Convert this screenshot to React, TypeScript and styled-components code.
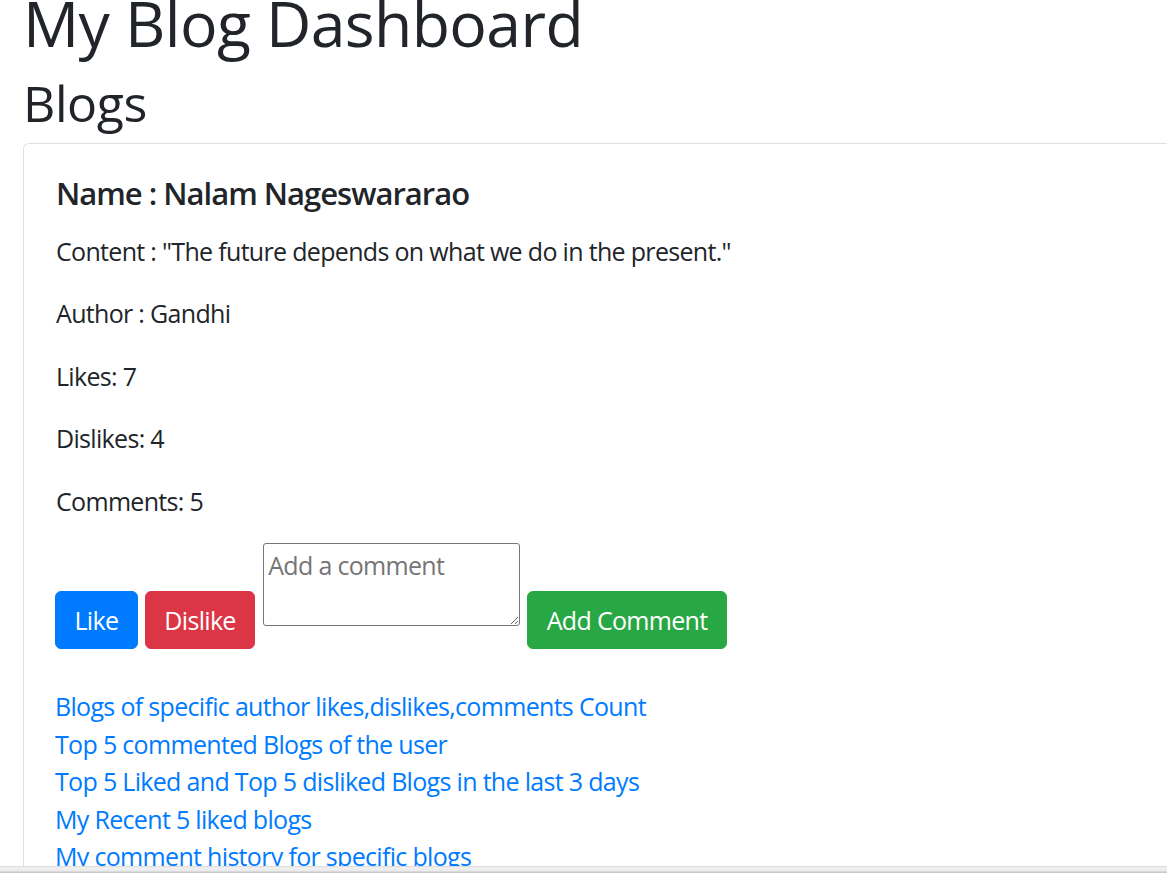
import React from "react";
import styled, { createGlobalStyle } from "styled-components";

const Global = createGlobalStyle`
  html, body {
    margin: 0;
    padding: 0;
    background: #ffffff;
    overflow: hidden;
  }
  body {
    font-family: "Open Sans", "Noto Sans", "Liberation Sans", sans-serif;
    font-size: 25px;
    line-height: 1.5;
    letter-spacing: -0.68px;
    color: #212529;
  }
  * { box-sizing: border-box; }
`;

const Page = styled.div`
  padding: 0 23px;
  margin-top: -15px;
  width: 1400px;
`;

const Title = styled.h1`
  font-size: 62.5px;
  font-weight: 500;
  letter-spacing: -0.6px;
  line-height: 75px;
  margin: 0 0 12.5px;
  color: #212529;
`;

const Subtitle = styled.h2`
  font-size: 50px;
  font-weight: 500;
  letter-spacing: -0.4px;
  line-height: 60px;
  margin: 0 0 10.5px;
  color: #212529;
`;

const Card = styled.div`
  border: 1px solid rgba(0, 0, 0, 0.125);
  border-radius: 6px;
  background: #fff;
  min-height: 900px;
`;

const CardBody = styled.div`
  padding: 31px 32px;
`;

const CardTitle = styled.h5`
  font-size: 31px;
  font-weight: 600;
  letter-spacing: -1px;
  line-height: 37.5px;
  margin: 0 0 20px;
  color: #212529;
`;

const Field = styled.p`
  margin: 0 0 25px;
  line-height: 37.5px;
`;

const ActionRow = styled.div`
  display: flex;
  align-items: flex-end;
  gap: 7px;
  margin: -2px 0 0 -1px;
`;

const Button = styled.button<{ $variant: "primary" | "danger" | "success" }>`
  font-family: inherit;
  font-size: 25px;
  letter-spacing: -0.68px;
  line-height: 1;
  height: 58px;
  padding: 0 18.5px;
  border: 1.5px solid transparent;
  border-radius: 6px;
  color: #fff;
  cursor: pointer;
  display: inline-flex;
  align-items: center;
  justify-content: center;
  background: ${(p) =>
    p.$variant === "primary" ? "#007bff" : p.$variant === "danger" ? "#dc3545" : "#28a745"};
  border-color: ${(p) =>
    p.$variant === "primary" ? "#007bff" : p.$variant === "danger" ? "#dc3545" : "#28a745"};
`;

const CommentBox = styled.textarea`
  width: 257px;
  height: 83px;
  margin: 0 0 23px 1px;
  padding: 3px 4px;
  font-family: inherit;
  font-size: 25px;
  letter-spacing: -0.68px;
  line-height: 37.5px;
  color: #212529;
  border: 1px solid #767676;
  border-radius: 3px;
  resize: vertical;
  overflow: auto;
  &::placeholder {
    color: #757575;
  }
`;

const LinkList = styled.div`
  display: flex;
  flex-direction: column;
  margin: 39px 0 0 -1px;
`;

const LinkItem = styled.a`
  color: #007bff;
  text-decoration: none;
  line-height: 37.5px;
  align-self: flex-start;
`;

const WindowEdge = styled.div`
  position: fixed;
  left: 0;
  right: 0;
  bottom: 0;
  height: 7px;
  background: linear-gradient(#dcdcdc 0, #dcdcdc 1px, #f0f0f0 1px, #ebebeb 5px, #c8c8c8 6px);
`;

const links = [
  "Blogs of specific author likes,dislikes,comments Count",
  "Top 5 commented Blogs of the user",
  "Top 5 Liked and Top 5 disliked Blogs in the last 3 days",
  "My Recent 5 liked blogs",
  "My comment history for specific blogs",
];

export default function App() {
  return (
    <>
      <Global />
      <Page>
        <Title>My Blog Dashboard</Title>
        <Subtitle>Blogs</Subtitle>
        <Card>
          <CardBody>
            <CardTitle>Name : Nalam Nageswararao</CardTitle>
            <Field>Content : "The future depends on what we do in the present."</Field>
            <Field>Author : Gandhi</Field>
            <Field>Likes: 7</Field>
            <Field>Dislikes: 4</Field>
            <Field>Comments: 5</Field>
            <ActionRow>
              <Button $variant="primary">Like</Button>
              <Button $variant="danger">Dislike</Button>
              <CommentBox placeholder="Add a comment" />
              <Button $variant="success">Add Comment</Button>
            </ActionRow>
            <LinkList>
              {links.map((l) => (
                <LinkItem key={l} href="#">
                  {l}
                </LinkItem>
              ))}
            </LinkList>
          </CardBody>
        </Card>
      </Page>
      <WindowEdge />
    </>
  );
}
